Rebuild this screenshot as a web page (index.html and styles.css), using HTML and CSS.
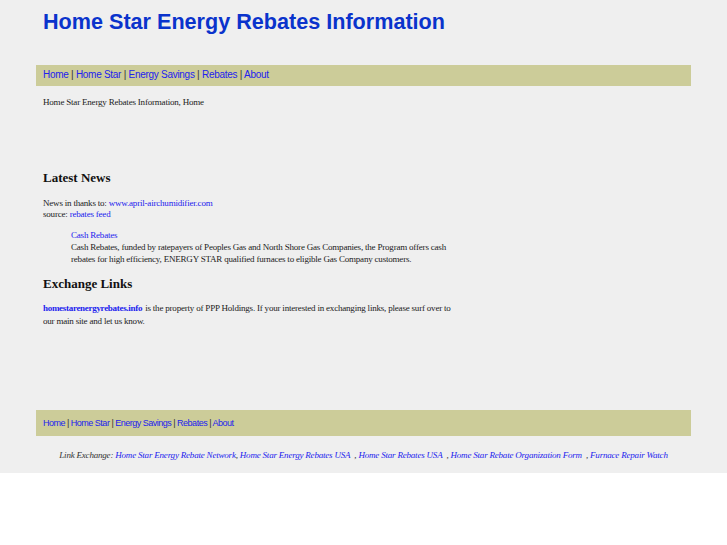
FILE: index.html
```html
<!DOCTYPE html>
<html>
<head>
<meta charset="utf-8">
<title>Home Star Energy Rebates Information</title>
<link rel="stylesheet" href="styles.css">
</head>
<body>
<div class="page">
  <div class="wrap">
    <h1 class="title">Home Star Energy Rebates Information</h1>
    <div class="nav nav-top">
      <a href="#">Home</a> | <a href="#">Home Star</a> | <a href="#">Energy Savings</a> | <a href="#">Rebates</a> | <a href="#">About</a>
    </div>
    <div class="content">
      <p class="crumb">Home Star Energy Rebates Information, Home</p>
      <h2 class="head news-head">Latest News</h2>
      <p class="src">News in thanks to: <a href="#">www.april-airchumidifier.com</a><br>source: <a href="#">rebates feed</a></p>
      <div class="item">
        <a href="#">Cash Rebates</a><br>
        Cash Rebates, funded by ratepayers of Peoples Gas and North Shore Gas Companies, the Program offers cash rebates for high efficiency, ENERGY STAR qualified furnaces to eligible Gas Company customers.
      </div>
      <h2 class="head">Exchange Links</h2>
      <p class="prop"><a href="#" class="strong">homestarenergyrebates.info</a> is the property of PPP Holdings. If your interested in exchanging links, please surf over to our main site and let us know.</p>
    </div>
    <div class="nav nav-bottom">
      <a href="#">Home</a> | <a href="#">Home Star</a> | <a href="#">Energy Savings</a> | <a href="#">Rebates</a> | <a href="#">About</a>
    </div>
    <p class="exchange">Link Exchange: <a href="#">Home Star Energy Rebate Network</a>, <a href="#">Home Star Energy Rebates USA</a> &nbsp;, <a href="#">Home Star Rebates USA</a> &nbsp;, <a href="#">Home Star Rebate Organization Form</a> &nbsp;, <a href="#">Furnace Repair Watch</a></p>
  </div>
</div>
</body>
</html>
```

FILE: styles.css
```css
html, body {
  margin: 0;
  padding: 0;
  background: #ffffff;
}
.page {
  background: #efefef;
  height: 473px;
  overflow: hidden;
}
.wrap {
  margin-left: 36px;
  width: 655px;
}
.title {
  margin: 0;
  padding: 9px 0 0 7px;
  height: 56px;
  box-sizing: border-box;
  font-family: "Liberation Sans", Arial, sans-serif;
  font-weight: bold;
  font-size: 21.6px;
  line-height: 26px;
  color: #0a33cc;
}
.nav {
  background: #cccc99;
  padding-left: 7px;
  font-family: "Liberation Sans", Arial, sans-serif;
  color: #333333;
}
.nav a {
  color: #2222ee;
  text-decoration: none;
}
.nav-top {
  margin-top: 9px;
  height: 21px;
  font-size: 10px;
  line-height: 20px;
  letter-spacing: -0.28px;
}
.nav-bottom {
  height: 26px;
  font-size: 9px;
  line-height: 26px;
  letter-spacing: -0.5px;
}
.content {
  padding-left: 7px;
  width: 420px;
  height: 324px;
  font-family: "Liberation Serif", "Times New Roman", serif;
  font-size: 9px;
  line-height: 12px;
  color: #222222;
  letter-spacing: -0.2px;
}
.content a {
  color: #2222ee;
  text-decoration: none;
}
.content p {
  margin: 0;
}
.crumb {
  padding-top: 10px;
}
.head {
  margin: 0;
  font-family: "Liberation Serif", "Times New Roman", serif;
  font-size: 13px;
  line-height: 16px;
  font-weight: bold;
  color: #111111;
  letter-spacing: 0;
}
.news-head {
  margin-top: 62px;
}
.src {
  margin-top: 12px !important;
  line-height: 11px;
}
.item {
  margin: 9px 0 0 28px;
}
.item + .head {
  margin-top: 11px;
}
.prop {
  margin-top: 10px !important;
  line-height: 13px;
}
.strong {
  font-weight: bold;
  letter-spacing: -0.3px;
  margin-right: 1px;
}
.exchange {
  margin: 13px 0 0;
  text-align: center;
  font-family: "Liberation Serif", "Times New Roman", serif;
  font-style: italic;
  font-size: 9px;
  line-height: 12px;
  color: #333333;
  letter-spacing: -0.2px;
}
.exchange a {
  color: #2222ee;
  text-decoration: none;
}
```
